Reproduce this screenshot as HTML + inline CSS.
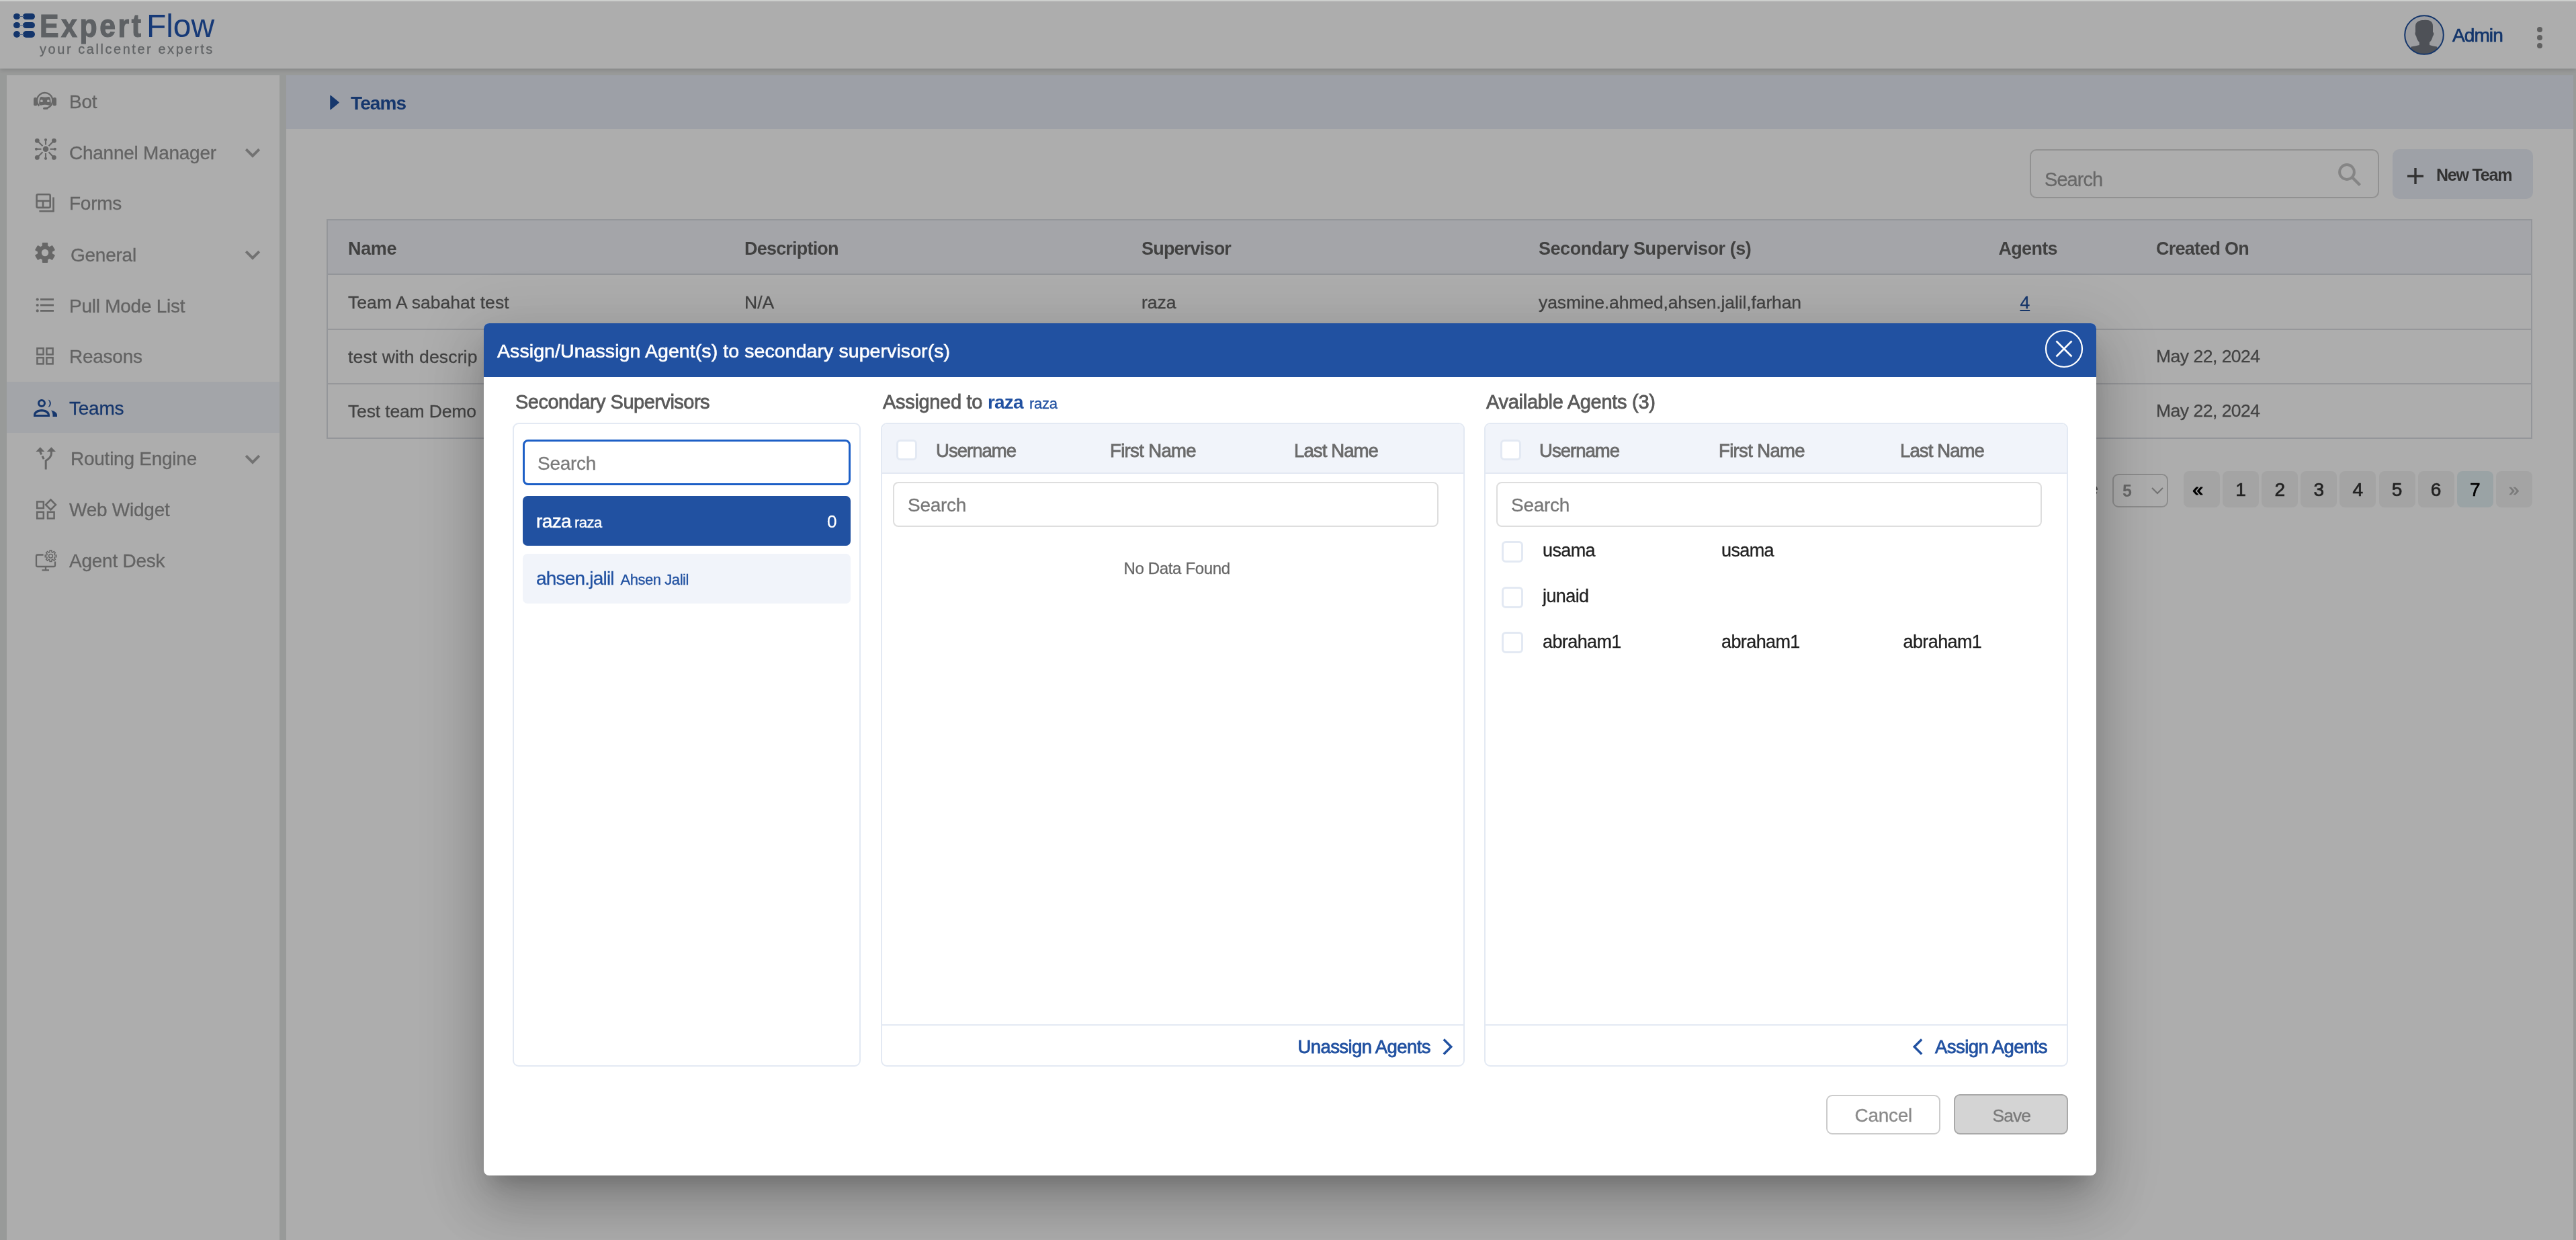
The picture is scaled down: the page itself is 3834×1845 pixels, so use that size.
<!DOCTYPE html>
<html><head><meta charset="utf-8"><title>Teams</title>
<style>
html,body{margin:0;padding:0}
body{width:3834px;height:1845px;overflow:hidden;position:relative;background:#e1e3e2;font-family:"Liberation Sans",sans-serif}
.a{position:absolute;white-space:nowrap;box-sizing:border-box}
svg{position:absolute;overflow:visible}
</style></head><body><div style="position:absolute;left:0;top:0;width:3834px;height:1845px;will-change:transform">

<div class="a" style="left:0px;top:0px;width:3834px;height:102px;background:#ffffff;box-shadow:0 3px 6px rgba(0,0,0,0.12)"></div>
<div class="a" style="left:20px;top:20.0px;width:9.6px;height:9.4px;background:#1d4f9e;border-radius:5px"></div>
<div class="a" style="left:34.3px;top:20.0px;width:17.7px;height:9.4px;background:#1d4f9e;border-radius:5px"></div>
<div class="a" style="left:28px;top:24.2px;width:8px;height:1px;background:#6d8fc4"></div>
<div class="a" style="left:20px;top:33.099999999999994px;width:9.6px;height:9.4px;background:#1d4f9e;border-radius:5px"></div>
<div class="a" style="left:34.3px;top:33.099999999999994px;width:17.7px;height:9.4px;background:#1d4f9e;border-radius:5px"></div>
<div class="a" style="left:28px;top:37.3px;width:8px;height:1px;background:#6d8fc4"></div>
<div class="a" style="left:20px;top:46.4px;width:9.6px;height:9.4px;background:#1d4f9e;border-radius:5px"></div>
<div class="a" style="left:34.3px;top:46.4px;width:17.7px;height:9.4px;background:#1d4f9e;border-radius:5px"></div>
<div class="a" style="left:28px;top:50.6px;width:8px;height:1px;background:#6d8fc4"></div>
<div class="a" style="left:59px;top:15.2px;font-size:47.5px;line-height:47.5px;color:#8b9094;font-weight:700;letter-spacing:4px;transform:scaleX(0.9);transform-origin:0 0;-webkit-text-stroke:1.2px #8b9094;">Expert</div>
<div class="a" style="left:218px;top:15.0px;font-size:48px;line-height:48px;color:#2356b0;letter-spacing:-0.1px;">Flow</div>
<div class="a" style="left:59px;top:63.3px;font-size:20px;line-height:20px;color:#8f9396;letter-spacing:2.55px;-webkit-text-stroke:0.3px #8f9396;">your callcenter experts</div>
<svg style="left:3578px;top:22px" width="60" height="60" viewBox="0 0 60 60">
<defs><clipPath id="avc"><circle cx="30" cy="30" r="28.5"/></clipPath></defs>
<circle cx="30" cy="30" r="29" fill="#e8e9ee"/>
<g clip-path="url(#avc)" fill="#737880">
<path d="M29.5 8C22 8 17 10.5 17 17.5V26C16 26.5 16.5 30.5 18 31.5C19 36 21 39.5 22.8 41V45C19 46 14 47 10.7 47.6L4 62H56L49 47.6C46 47 41 46 38 45V41C40 39.5 42 36 43 31.5C44.5 30.5 45 26.5 43 26V16.5C43 10 38 7 29.5 8Z"/>
</g>
<circle cx="30" cy="30" r="28.8" fill="none" stroke="#1d4f9e" stroke-width="2"/>
</svg>
<div class="a" style="left:3650px;top:39.0px;font-size:28px;line-height:28px;color:#1d4f9e;letter-spacing:-0.9px;-webkit-text-stroke:0.7px #1d4f9e;">Admin</div>
<div class="a" style="left:3776px;top:40px;width:8px;height:8px;background:#8f8f8f;border-radius:50%"></div>
<div class="a" style="left:3776px;top:52px;width:8px;height:8px;background:#8f8f8f;border-radius:50%"></div>
<div class="a" style="left:3776px;top:64px;width:8px;height:8px;background:#8f8f8f;border-radius:50%"></div>
<div class="a" style="left:10px;top:112px;width:406px;height:1733px;background:#ffffff"></div>
<div class="a" style="left:10px;top:568px;width:406px;height:76px;background:#f1f3f9"></div>
<div class="a" style="left:103px;top:137.5px;font-size:28px;line-height:28px;color:#939393;letter-spacing:-0.25px;-webkit-text-stroke:0.3px #939393;">Bot</div>
<div class="a" style="left:103px;top:213.5px;font-size:28px;line-height:28px;color:#939393;letter-spacing:-0.25px;-webkit-text-stroke:0.3px #939393;">Channel Manager</div>
<div class="a" style="left:103px;top:289.0px;font-size:28px;line-height:28px;color:#939393;letter-spacing:-0.25px;-webkit-text-stroke:0.3px #939393;">Forms</div>
<div class="a" style="left:105px;top:365.5px;font-size:28px;line-height:28px;color:#939393;letter-spacing:-0.25px;-webkit-text-stroke:0.3px #939393;">General</div>
<div class="a" style="left:103px;top:442.0px;font-size:28px;line-height:28px;color:#939393;letter-spacing:-0.25px;-webkit-text-stroke:0.3px #939393;">Pull Mode List</div>
<div class="a" style="left:103px;top:517.0px;font-size:28px;line-height:28px;color:#939393;letter-spacing:-0.25px;-webkit-text-stroke:0.3px #939393;">Reasons</div>
<div class="a" style="left:103px;top:593.5px;font-size:28px;line-height:28px;color:#2151a1;letter-spacing:-0.25px;-webkit-text-stroke:0.3px #2151a1;">Teams</div>
<div class="a" style="left:105px;top:669.0px;font-size:28px;line-height:28px;color:#939393;letter-spacing:-0.25px;-webkit-text-stroke:0.3px #939393;">Routing Engine</div>
<div class="a" style="left:103px;top:744.5px;font-size:28px;line-height:28px;color:#939393;letter-spacing:-0.25px;-webkit-text-stroke:0.3px #939393;">Web Widget</div>
<div class="a" style="left:103px;top:820.5px;font-size:28px;line-height:28px;color:#939393;letter-spacing:-0.25px;-webkit-text-stroke:0.3px #939393;">Agent Desk</div>
<svg style="left:363px;top:219px" width="26" height="18" viewBox="0 0 26 18"><path d="M3.2 3.2L13 13 22.8 3.2" fill="none" stroke="#a8a8a8" stroke-width="3.9"/></svg>
<svg style="left:363px;top:371px" width="26" height="18" viewBox="0 0 26 18"><path d="M3.2 3.2L13 13 22.8 3.2" fill="none" stroke="#a8a8a8" stroke-width="3.9"/></svg>
<svg style="left:363px;top:674.5px" width="26" height="18" viewBox="0 0 26 18"><path d="M3.2 3.2L13 13 22.8 3.2" fill="none" stroke="#a8a8a8" stroke-width="3.9"/></svg>
<svg style="left:44px;top:130px" width="50" height="40" viewBox="0 0 50 40">
<path d="M14.2 27.6A11.6 11.6 0 1 1 29.2 29.2Q26.5 31.3 21.5 31.3" fill="none" stroke="#999999" stroke-width="2.4"/>
<path d="M21.5 31.3H26" stroke="#999999" stroke-width="3" stroke-linecap="round"/>
<rect x="6" y="15" width="5.4" height="12.6" rx="2.4" fill="#999999"/>
<rect x="34.6" y="15" width="5.4" height="12.6" rx="2.4" fill="#999999"/>
<path d="M15 16.5Q15.3 13.9 18 13.9Q23 15.4 28 13.9Q30.7 13.9 31 16.5L31.9 23.8Q32 26.9 28.8 26.8Q23 24.9 17.2 26.8Q14 26.9 14.1 23.8z" fill="#999999"/>
<circle cx="17.9" cy="20.2" r="1.9" fill="#fff"/><circle cx="27.9" cy="20.2" r="1.9" fill="#fff"/>
</svg>
<svg style="left:44px;top:200px" width="50" height="45" viewBox="0 0 50 45">
<g stroke="#999999" stroke-width="2.1" stroke-linecap="butt">
<line x1="19.5" y1="17.3" x2="11.3" y2="9.3"/><line x1="28.5" y1="17.3" x2="36.4" y2="9.3"/>
<line x1="19.5" y1="26.3" x2="11.3" y2="34.4"/><line x1="28.5" y1="26.3" x2="36.4" y2="34.4"/>
<line x1="24" y1="8" x2="24" y2="15.5"/><line x1="24" y1="28" x2="24" y2="35.8"/>
<line x1="10" y1="21.8" x2="17.5" y2="21.8"/><line x1="30.5" y1="21.8" x2="37.8" y2="21.8"/>
</g>
<g fill="#999999"><circle cx="24" cy="21.8" r="4.3"/>
<circle cx="11.3" cy="9.3" r="3.4"/><circle cx="36.4" cy="9.3" r="3.4"/><circle cx="11.3" cy="34.4" r="3.4"/><circle cx="36.4" cy="34.4" r="3.4"/>
<circle cx="24" cy="8" r="2.1"/><circle cx="24" cy="35.8" r="2.1"/><circle cx="10" cy="21.8" r="2.1"/><circle cx="37.8" cy="21.8" r="2.1"/>
</g></svg>
<svg style="left:44px;top:280px" width="50" height="40" viewBox="0 0 50 40">
<g fill="none" stroke="#999999" stroke-width="2.6">
<rect x="10.6" y="9.3" width="20.1" height="19.6" rx="2"/><line x1="10.6" y1="19" x2="30.7" y2="19"/><line x1="20" y1="19" x2="20" y2="28.9"/>
<path d="M35.5 13.5V34.3H14.4"/>
</g></svg>
<svg style="left:52px;top:361px" width="30" height="30" viewBox="-15 -15 30 30">
<g fill="#999999"><circle r="11"/><rect x="-4.2" y="-15" width="8.4" height="8" rx="1" transform="rotate(0)"/><rect x="-4.2" y="-15" width="8.4" height="8" rx="1" transform="rotate(60)"/><rect x="-4.2" y="-15" width="8.4" height="8" rx="1" transform="rotate(120)"/><rect x="-4.2" y="-15" width="8.4" height="8" rx="1" transform="rotate(180)"/><rect x="-4.2" y="-15" width="8.4" height="8" rx="1" transform="rotate(240)"/><rect x="-4.2" y="-15" width="8.4" height="8" rx="1" transform="rotate(300)"/></g><circle r="5.2" fill="#fff"/>
</svg>
<svg style="left:44px;top:430px" width="50" height="40" viewBox="0 0 50 40">
<g fill="#999999"><circle cx="11.7" cy="15.5" r="2.1"/><circle cx="11.7" cy="24" r="2.1"/><circle cx="11.7" cy="32.4" r="2.1"/>
<rect x="16" y="14.1" width="20" height="2.8"/><rect x="16" y="22.6" width="20" height="2.8"/><rect x="16" y="31" width="20" height="2.8"/></g>
</svg>
<svg style="left:44px;top:510px" width="50" height="40" viewBox="0 0 50 40">
<g fill="none" stroke="#999999" stroke-width="2.5"><rect x="11.4" y="8.2" width="9.2" height="9.2"/><rect x="25.4" y="8.2" width="9.2" height="9.2"/><rect x="11.4" y="22.2" width="9.2" height="9.2"/><rect x="25.4" y="22.2" width="9.2" height="9.2"/></g>
</svg>
<svg style="left:50px;top:593px" width="35" height="27" viewBox="0 0 35 27">
<g fill="#2151a1">
<path d="M12 1a6 6 0 1 0 0 12a6 6 0 1 0 0-12zm0 3a3 3 0 1 1 0 6a3 3 0 1 1 0-6z"/>
<path d="M21.5 1.5a6 6 0 0 1 0 11.5a8 8 0 0 0 0-11.5z"/>
<path d="M0 27v-2.5C0 19.5 5.5 16 12 16s12 3.5 12 8.5V27zm3.2-3h17.6c-.8-2.5-4-4.5-8.8-4.5s-8 2-8.8 4.5z"/>
<path d="M26 17.5c5 1.2 9 3.5 9 7V27h-6.5v-2.5c0-2.5-1-5-2.5-7z"/>
</g></svg>
<svg style="left:44px;top:655px" width="50" height="50" viewBox="0 0 50 50">
<g fill="#999999"><path d="M9.4 17H22.3L15.85 10.3z"/><path d="M25.8 17H39L32.4 10.3z"/></g>
<g fill="none" stroke="#999999" stroke-width="3">
<path d="M32.4 16.5V20Q32.4 25.5 24.2 30.5V43.5"/>
<path d="M15.6 16.8L17.8 21.3M19 23.7L21.2 28.2"/>
</g></svg>
<svg style="left:44px;top:735px" width="50" height="45" viewBox="0 0 50 45">
<g fill="none" stroke="#999999" stroke-width="2.5"><rect x="11.2" y="11.5" width="9.6" height="9.6"/><rect x="11.2" y="26.8" width="9.6" height="9.6"/><rect x="27" y="26.8" width="9.6" height="9.6"/>
<path d="M31.5 8.5L39 16 31.5 23.5 24 16z"/></g>
</svg>
<svg style="left:44px;top:810px" width="50" height="45" viewBox="0 0 50 45">
<g fill="none" stroke="#999999" stroke-width="2.3">
<path d="M20.6 15.5H12Q10 15.5 10 17.5V31Q10 33 12 33H36Q38 33 38 31V25.5"/>
<path d="M24 33V38M18.5 38.3H29"/>
</g>
<g transform="translate(31.5 17.3)" fill="#fff" stroke="#999999" stroke-width="1.5"><path d="M5.80 -1.54 L8.28 -1.42 L8.28 1.42 L5.80 1.54 L5.19 3.01 L6.86 4.85 L4.85 6.86 L3.01 5.19 L1.54 5.80 L1.42 8.28 L-1.42 8.28 L-1.54 5.80 L-3.01 5.19 L-4.85 6.86 L-6.86 4.85 L-5.19 3.01 L-5.80 1.54 L-8.28 1.42 L-8.28 -1.42 L-5.80 -1.54 L-5.19 -3.01 L-6.86 -4.85 L-4.85 -6.86 L-3.01 -5.19 L-1.54 -5.80 L-1.42 -8.28 L1.42 -8.28 L1.54 -5.80 L3.01 -5.19 L4.85 -6.86 L6.86 -4.85 L5.19 -3.01Z"/><circle r="2.9"/></g>
</svg>
<div class="a" style="left:426px;top:112px;width:3404px;height:1733px;background:#ffffff"></div>
<div class="a" style="left:426px;top:112px;width:3404px;height:80px;background:#e7ecf7"></div>
<svg style="left:491px;top:141px" width="14" height="23" viewBox="0 0 14 23"><path d="M1 1.5L13 11.5 1 21.5z" fill="#2151a1" stroke="#2151a1" stroke-width="1.5" stroke-linejoin="round"/></svg>
<div class="a" style="left:522px;top:140.0px;font-size:28px;line-height:28px;color:#2151a1;font-weight:700;letter-spacing:-0.9px;">Teams</div>
<div class="a" style="left:3021px;top:222px;width:520px;height:73px;border:2px solid #d6d6d6;border-radius:10px;background:#fff"></div>
<div class="a" style="left:3043px;top:252.5px;font-size:29px;line-height:29px;color:#9a9a9a;letter-spacing:-0.95px;-webkit-text-stroke:0.3px #9a9a9a;">Search</div>
<svg style="left:3480px;top:243px" width="36" height="36" viewBox="0 0 36 36"><circle cx="13" cy="13" r="10.9" fill="none" stroke="#c4c4c4" stroke-width="4"/><path d="M21.5 21.5l11 11" stroke="#c4c4c4" stroke-width="4.3"/></svg>
<div class="a" style="left:3561px;top:222px;width:209px;height:74px;background:#e9edf7;border-radius:10px"></div>
<svg style="left:3583px;top:250px" width="24" height="24" viewBox="0 0 24 24"><path d="M12 0v24M0 12h24" stroke="#4a4a4a" stroke-width="3.4"/></svg>
<div class="a" style="left:3626px;top:248.1px;font-size:25px;line-height:25px;color:#4a4a4a;font-weight:700;letter-spacing:-1.2px;">New Team</div>
<div class="a" style="left:486px;top:326px;width:3283px;height:327px;border:2px solid #dadde3;background:#fff"></div>
<div class="a" style="left:488px;top:328px;width:3279px;height:81px;background:#f2f4f9;border-bottom:2px solid #d9dce2"></div>
<div class="a" style="left:488px;top:489px;width:3279px;height:2px;background:#dddfe3"></div>
<div class="a" style="left:488px;top:570px;width:3279px;height:2px;background:#dddfe3"></div>
<div class="a" style="left:518px;top:357.0px;font-size:27px;line-height:27px;color:#606060;font-weight:700;letter-spacing:-0.35px;">Name</div>
<div class="a" style="left:1108px;top:357.0px;font-size:27px;line-height:27px;color:#606060;font-weight:700;letter-spacing:-0.8px;">Description</div>
<div class="a" style="left:1699px;top:357.0px;font-size:27px;line-height:27px;color:#606060;font-weight:700;letter-spacing:-0.8px;">Supervisor</div>
<div class="a" style="left:2290px;top:357.0px;font-size:27px;line-height:27px;color:#606060;font-weight:700;letter-spacing:-0.45px;">Secondary Supervisor (s)</div>
<div class="a" style="left:2974.5px;top:357.0px;font-size:27px;line-height:27px;color:#606060;font-weight:700;letter-spacing:-0.7px;">Agents</div>
<div class="a" style="left:3209px;top:357.0px;font-size:27px;line-height:27px;color:#606060;font-weight:700;letter-spacing:-0.75px;">Created On</div>
<div class="a" style="left:518px;top:436.8px;font-size:26.5px;line-height:26.5px;color:#646464;letter-spacing:0.05px;-webkit-text-stroke:0.3px #646464;">Team A sabahat test</div>
<div class="a" style="left:1108px;top:436.8px;font-size:26.5px;line-height:26.5px;color:#646464;-webkit-text-stroke:0.3px #646464;">N/A</div>
<div class="a" style="left:1699px;top:436.8px;font-size:26.5px;line-height:26.5px;color:#646464;-webkit-text-stroke:0.3px #646464;">raza</div>
<div class="a" style="left:2290px;top:436.8px;font-size:26.5px;line-height:26.5px;color:#646464;letter-spacing:-0.12px;-webkit-text-stroke:0.3px #646464;">yasmine.ahmed,ahsen.jalil,farhan</div>
<div class="a" style="left:3006.5px;top:436.8px;font-size:26.5px;line-height:26.5px;color:#2151a1;-webkit-text-stroke:0.3px #2151a1;text-decoration:underline;text-underline-offset:2px">4</div>
<div class="a" style="left:518px;top:517.8px;font-size:26.5px;line-height:26.5px;color:#646464;letter-spacing:0.15px;-webkit-text-stroke:0.3px #646464;">test with descrip</div>
<div class="a" style="left:518px;top:598.8px;font-size:26.5px;line-height:26.5px;color:#646464;letter-spacing:-0.15px;-webkit-text-stroke:0.3px #646464;">Test team Demo</div>
<div class="a" style="left:3209px;top:517.2px;font-size:26.5px;line-height:26.5px;color:#646464;letter-spacing:-0.5px;-webkit-text-stroke:0.3px #646464;">May 22, 2024</div>
<div class="a" style="left:3209px;top:598.2px;font-size:26.5px;line-height:26.5px;color:#646464;letter-spacing:-0.5px;-webkit-text-stroke:0.3px #646464;">May 22, 2024</div>
<div class="a" style="right:711px;top:712px;font-size:26px;line-height:30px;color:#555">Items per page</div>
<div class="a" style="left:3144px;top:705px;width:83px;height:50px;border:2px solid #cfcfcf;border-radius:9px"></div>
<div class="a" style="left:3159px;top:717.5px;font-size:25px;line-height:25px;color:#9a9a9a;font-weight:700;">5</div>
<svg style="left:3202px;top:725px" width="18" height="11" viewBox="0 0 18 11"><path d="M1 1l8 8 8-8" fill="none" stroke="#a9a9a9" stroke-width="2"/></svg>
<div class="a" style="left:3250.0px;top:701px;width:54px;height:54px;background:#f2f2f2;border-radius:8px"></div>
<div class="a" style="left:3244.0px;top:702px;width:54px;height:54px;line-height:54px;text-align:center;font-size:28px;-webkit-text-stroke:1.2px #000;color:#000">&laquo;</div>
<div class="a" style="left:3308.1px;top:701px;width:54px;height:54px;background:#f2f2f2;border-radius:8px"></div>
<div class="a" style="left:3308.1px;top:702px;width:54px;height:54px;line-height:54px;text-align:center;font-size:28px;-webkit-text-stroke:0.7px #333;color:#333">1</div>
<div class="a" style="left:3366.2px;top:701px;width:54px;height:54px;background:#f2f2f2;border-radius:8px"></div>
<div class="a" style="left:3366.2px;top:702px;width:54px;height:54px;line-height:54px;text-align:center;font-size:28px;-webkit-text-stroke:0.7px #333;color:#333">2</div>
<div class="a" style="left:3424.3px;top:701px;width:54px;height:54px;background:#f2f2f2;border-radius:8px"></div>
<div class="a" style="left:3424.3px;top:702px;width:54px;height:54px;line-height:54px;text-align:center;font-size:28px;-webkit-text-stroke:0.7px #333;color:#333">3</div>
<div class="a" style="left:3482.4px;top:701px;width:54px;height:54px;background:#f2f2f2;border-radius:8px"></div>
<div class="a" style="left:3482.4px;top:702px;width:54px;height:54px;line-height:54px;text-align:center;font-size:28px;-webkit-text-stroke:0.7px #333;color:#333">4</div>
<div class="a" style="left:3540.5px;top:701px;width:54px;height:54px;background:#f2f2f2;border-radius:8px"></div>
<div class="a" style="left:3540.5px;top:702px;width:54px;height:54px;line-height:54px;text-align:center;font-size:28px;-webkit-text-stroke:0.7px #333;color:#333">5</div>
<div class="a" style="left:3598.6px;top:701px;width:54px;height:54px;background:#f2f2f2;border-radius:8px"></div>
<div class="a" style="left:3598.6px;top:702px;width:54px;height:54px;line-height:54px;text-align:center;font-size:28px;-webkit-text-stroke:0.7px #333;color:#333">6</div>
<div class="a" style="left:3656.7px;top:701px;width:54px;height:54px;background:#e4f0f4;border-radius:8px"></div>
<div class="a" style="left:3656.7px;top:702px;width:54px;height:54px;line-height:54px;text-align:center;font-size:28px;-webkit-text-stroke:0.7px #000;color:#000">7</div>
<div class="a" style="left:3714.8px;top:701px;width:54px;height:54px;background:#f2f2f2;border-radius:8px"></div>
<div class="a" style="left:3714.8px;top:702px;width:54px;height:54px;line-height:54px;text-align:center;font-size:28px;-webkit-text-stroke:0.7px #b5b5b5;color:#b5b5b5">&raquo;</div>
<div class="a" style="left:0px;top:0px;width:3834px;height:1845px;background:rgba(0,0,0,0.32)"></div>
<div class="a" style="left:0px;top:0px;width:3834px;height:2px;background:#cdcfcd"></div>
<div class="a" style="left:720px;top:481px;width:2400px;height:1268px;background:#fff;border-radius:8px;box-shadow:0 22px 30px -14px rgba(0,0,0,.2),0 48px 76px 6px rgba(0,0,0,.14),0 18px 92px 16px rgba(0,0,0,.12)"></div>
<div class="a" style="left:720px;top:481px;width:2400px;height:80px;background:#2151a1;border-radius:8px 8px 0 0"></div>
<div class="a" style="left:740px;top:508.2px;font-size:28.5px;line-height:28.5px;color:#ffffff;letter-spacing:0.08px;-webkit-text-stroke:0.6px #ffffff;">Assign/Unassign Agent(s) to secondary supervisor(s)</div>
<svg style="left:3044px;top:491px" width="56" height="56" viewBox="0 0 56 56"><circle cx="28" cy="28" r="27" fill="none" stroke="#fff" stroke-width="2.2"/><path d="M16.5 16.5l23 23M39.5 16.5l-23 23" stroke="#fff" stroke-width="2.6"/></svg>
<div class="a" style="left:767px;top:583.9px;font-size:29px;line-height:29px;color:#5a5a5a;letter-spacing:-0.51px;-webkit-text-stroke:0.8px #5a5a5a;">Secondary Supervisors</div>
<div class="a" style="left:1314px;top:583.9px;font-size:29px;line-height:29px;color:#5a5a5a;letter-spacing:-0.32px;-webkit-text-stroke:0.8px #5a5a5a;">Assigned to</div>
<div class="a" style="left:1470px;top:584.9px;font-size:28px;line-height:28px;color:#2151a1;font-weight:700;letter-spacing:-0.8px;">raza</div>
<div class="a" style="left:1532px;top:589.9px;font-size:22px;line-height:22px;color:#2151a1;letter-spacing:-0.3px;-webkit-text-stroke:0.3px #2151a1;">raza</div>
<div class="a" style="left:2212px;top:583.9px;font-size:29px;line-height:29px;color:#5a5a5a;letter-spacing:-0.29px;-webkit-text-stroke:0.8px #5a5a5a;">Available Agents (3)</div>
<div class="a" style="left:763px;top:629px;width:518px;height:958px;border:2px solid #e3e9f3;border-radius:9px"></div>
<div class="a" style="left:778px;top:654px;width:488px;height:68px;border:3.5px solid #1d5fc6;border-radius:8px"></div>
<div class="a" style="left:800px;top:675.5px;font-size:28px;line-height:28px;color:#7a7a7a;letter-spacing:-0.3px;-webkit-text-stroke:0.3px #7a7a7a;">Search</div>
<div class="a" style="left:778px;top:738px;width:488px;height:74px;background:#2151a1;border-radius:7px"></div>
<div class="a" style="left:798px;top:761.5px;font-size:28px;line-height:28px;color:#fff;letter-spacing:-0.6px;-webkit-text-stroke:0.5px #fff;">raza</div>
<div class="a" style="left:855px;top:766.5px;font-size:22px;line-height:22px;color:#fff;letter-spacing:-0.5px;-webkit-text-stroke:0.3px #fff;">raza</div>
<div class="a" style="left:1231px;top:763.0px;font-size:26px;line-height:26px;color:#fff;-webkit-text-stroke:0.3px #fff;">0</div>
<div class="a" style="left:778px;top:824px;width:488px;height:74px;background:#f1f4fa;border-radius:7px"></div>
<div class="a" style="left:798px;top:846.5px;font-size:28px;line-height:28px;color:#2151a1;letter-spacing:-0.8px;-webkit-text-stroke:0.3px #2151a1;">ahsen.jalil</div>
<div class="a" style="left:923.5px;top:851.5px;font-size:22px;line-height:22px;color:#2151a1;letter-spacing:-0.45px;-webkit-text-stroke:0.3px #2151a1;">Ahsen Jalil</div>
<div class="a" style="left:1311px;top:629px;width:869px;height:958px;border:2px solid #e3e9f3;border-radius:9px"></div>
<div class="a" style="left:1313px;top:631px;width:865px;height:74px;background:#f1f4fa;border-bottom:2px solid #e3e9f3;border-radius:7px 7px 0 0"></div>
<div class="a" style="left:1334px;top:653.5px;width:31px;height:31px;background:#fff;border:3px solid #e3e9f3;border-radius:6px"></div>
<div class="a" style="left:1393px;top:656.8px;font-size:27.5px;line-height:27.5px;color:#6a6a6a;letter-spacing:-0.98px;-webkit-text-stroke:0.8px #6a6a6a;">Username</div>
<div class="a" style="left:1652px;top:656.8px;font-size:27.5px;line-height:27.5px;color:#6a6a6a;letter-spacing:-0.65px;-webkit-text-stroke:0.8px #6a6a6a;">First Name</div>
<div class="a" style="left:1926px;top:656.8px;font-size:27.5px;line-height:27.5px;color:#6a6a6a;letter-spacing:-0.89px;-webkit-text-stroke:0.8px #6a6a6a;">Last Name</div>
<div class="a" style="left:1329px;top:716.5px;width:812px;height:67px;border:2px solid #dedede;border-radius:8px"></div>
<div class="a" style="left:1351px;top:737.5px;font-size:28px;line-height:28px;color:#777777;letter-spacing:-0.3px;-webkit-text-stroke:0.3px #777777;">Search</div>
<div class="a" style="left:1313px;top:1524px;width:865px;height:2px;background:#e3e9f3"></div>
<div class="a" style="left:1672.5px;top:833.5px;font-size:24px;line-height:24px;color:#666666;letter-spacing:-0.35px;-webkit-text-stroke:0.3px #666666;">No Data Found</div>
<div class="a" style="left:1931.5px;top:1544.3px;font-size:27.5px;line-height:27.5px;color:#2151a1;letter-spacing:-0.6px;-webkit-text-stroke:0.8px #2151a1;">Unassign Agents</div>
<svg style="left:2146px;top:1544px" width="18" height="27" viewBox="0 0 18 27"><path d="M2.8 2.5l11 11-11 11" fill="none" stroke="#2151a1" stroke-width="3.4"/></svg>
<div class="a" style="left:2209px;top:629px;width:869px;height:958px;border:2px solid #e3e9f3;border-radius:9px"></div>
<div class="a" style="left:2211px;top:631px;width:865px;height:74px;background:#f1f4fa;border-bottom:2px solid #e3e9f3;border-radius:7px 7px 0 0"></div>
<div class="a" style="left:2232.5px;top:653.5px;width:31px;height:31px;background:#fff;border:3px solid #e3e9f3;border-radius:6px"></div>
<div class="a" style="left:2291px;top:656.8px;font-size:27.5px;line-height:27.5px;color:#6a6a6a;letter-spacing:-0.98px;-webkit-text-stroke:0.8px #6a6a6a;">Username</div>
<div class="a" style="left:2558px;top:656.8px;font-size:27.5px;line-height:27.5px;color:#6a6a6a;letter-spacing:-0.65px;-webkit-text-stroke:0.8px #6a6a6a;">First Name</div>
<div class="a" style="left:2828px;top:656.8px;font-size:27.5px;line-height:27.5px;color:#6a6a6a;letter-spacing:-0.89px;-webkit-text-stroke:0.8px #6a6a6a;">Last Name</div>
<div class="a" style="left:2227px;top:716.5px;width:812px;height:67px;border:2px solid #dedede;border-radius:8px"></div>
<div class="a" style="left:2249px;top:737.5px;font-size:28px;line-height:28px;color:#777777;letter-spacing:-0.3px;-webkit-text-stroke:0.3px #777777;">Search</div>
<div class="a" style="left:2211px;top:1524px;width:865px;height:2px;background:#e3e9f3"></div>
<div class="a" style="left:2235px;top:805.0px;width:32px;height:32px;background:#fff;border:3px solid #e3e9f3;border-radius:6px"></div>
<div class="a" style="left:2235px;top:872.7px;width:32px;height:32px;background:#fff;border:3px solid #e3e9f3;border-radius:6px"></div>
<div class="a" style="left:2235px;top:940.4px;width:32px;height:32px;background:#fff;border:3px solid #e3e9f3;border-radius:6px"></div>
<div class="a" style="left:2296px;top:805.5px;font-size:27px;line-height:27px;color:#222222;letter-spacing:-0.6px;-webkit-text-stroke:0.3px #222222;">usama</div>
<div class="a" style="left:2562px;top:805.5px;font-size:27px;line-height:27px;color:#222222;letter-spacing:-0.6px;-webkit-text-stroke:0.3px #222222;">usama</div>
<div class="a" style="left:2296px;top:873.5px;font-size:27px;line-height:27px;color:#222222;letter-spacing:-0.6px;-webkit-text-stroke:0.3px #222222;">junaid</div>
<div class="a" style="left:2296px;top:941.5px;font-size:27px;line-height:27px;color:#222222;letter-spacing:-0.6px;-webkit-text-stroke:0.3px #222222;">abraham1</div>
<div class="a" style="left:2562px;top:941.5px;font-size:27px;line-height:27px;color:#222222;letter-spacing:-0.6px;-webkit-text-stroke:0.3px #222222;">abraham1</div>
<div class="a" style="left:2832.5px;top:941.5px;font-size:27px;line-height:27px;color:#222222;letter-spacing:-0.6px;-webkit-text-stroke:0.3px #222222;">abraham1</div>
<svg style="left:2845px;top:1544px" width="18" height="27" viewBox="0 0 18 27"><path d="M15.2 2.5l-11 11 11 11" fill="none" stroke="#2151a1" stroke-width="3.4"/></svg>
<div class="a" style="left:2880px;top:1543.8px;font-size:27.5px;line-height:27.5px;color:#2151a1;letter-spacing:-0.56px;-webkit-text-stroke:0.8px #2151a1;">Assign Agents</div>
<div class="a" style="left:2718px;top:1629px;width:170px;height:59px;border:2px solid #cccccc;border-radius:9px;background:#fff"></div>
<div class="a" style="left:2760.5px;top:1645.5px;font-size:28px;line-height:28px;color:#8a8a8a;letter-spacing:-0.3px;-webkit-text-stroke:0.3px #8a8a8a;">Cancel</div>
<div class="a" style="left:2908px;top:1628px;width:170px;height:60px;border:2px solid #a9a9a9;border-radius:9px;background:#d4d4d4"></div>
<div class="a" style="left:2965.4px;top:1646.8px;font-size:26.5px;line-height:26.5px;color:#7a7a7a;letter-spacing:-0.9px;-webkit-text-stroke:0.3px #7a7a7a;">Save</div>
</div></body></html>
